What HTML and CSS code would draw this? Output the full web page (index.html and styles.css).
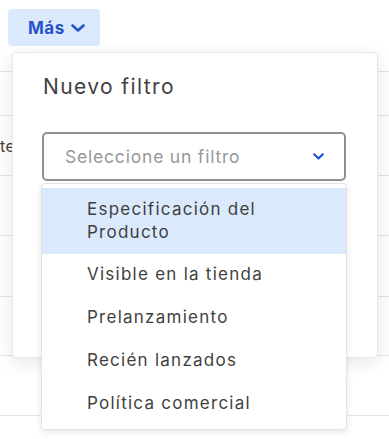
FILE: index.html
```html
<!DOCTYPE html>
<html lang="es">
<head>
<meta charset="utf-8">
<link rel="stylesheet" href="styles.css">
</head>
<body>
<div class="page">
  <div class="toolbar">
    <button class="more-btn">Más
      <svg class="more-chev" width="14" height="8" viewBox="0 0 14 8"><path d="M1.5 1.5 L7 6.5 L12.5 1.5" fill="none" stroke="currentColor" stroke-width="2.6" stroke-linecap="round" stroke-linejoin="round"/></svg>
    </button>
  </div>
  <div class="table">
    <div class="row r1"></div>
    <div class="row r2"></div>
    <div class="row r3"><span class="cell-text">te</span></div>
    <div class="row r4"></div>
    <div class="row r5"></div>
    <div class="row r6"></div>
    <div class="row r7"></div>
  </div>

  <div class="popover">
    <h2 class="pop-title">Nuevo filtro</h2>
    <div class="select-wrap">
      <div class="select">
        <span class="placeholder">Seleccione un filtro</span>
        <svg class="sel-chev" width="11" height="7" viewBox="0 0 11 7"><path d="M1.2 1.2 L5.5 5.5 L9.8 1.2" fill="none" stroke="currentColor" stroke-width="2" stroke-linecap="round" stroke-linejoin="round"/></svg>
      </div>
      <ul class="options">
        <li class="option active">Especificación del Producto</li>
        <li class="option">Visible en la tienda</li>
        <li class="option">Prelanzamiento</li>
        <li class="option">Recién lanzados</li>
        <li class="option">Política comercial</li>
      </ul>
    </div>
  </div>
</div>
</body>
</html>
```
FILE: styles.css
```css
* { box-sizing: border-box; }
html, body { margin: 0; padding: 0; background: #fff; }
body { font-family: Inter, "Noto Sans", sans-serif; color: #3f3f40; }
.page { position: relative; width: 389px; height: 439px; overflow: hidden; }

.toolbar { padding: 9px 8px 0; height: 46px; }
.more-btn {
  display: flex; align-items: center; gap: 6px;
  height: 37px; width: 92px; padding: 0 0 0 20px;
  background: #dbe9fd; color: #2953c8; border: 0; border-radius: 4px;
  font-family: inherit; font-size: 17px; font-weight: 700; letter-spacing: 0.5px;
}
.more-chev { margin-top: 1px; }

.table { display: flex; flex-direction: column; }
.row { border-bottom: 1px solid #e3e4e6; display: flex; align-items: center; }
.r1 { height: 26px; }
.r2 { height: 44px; }
.r3 { height: 60px; }
.r4 { height: 60px; }
.r5 { height: 61px; }
.r6 { height: 59px; }
.r7 { height: 60px; }
.cell-text { font-size: 16px; margin-left: 0; color: #3f3f40; letter-spacing: 0.3px; }

.popover {
  position: absolute; left: 12px; top: 52px; width: 366px; height: 306px;
  background: #fff; border: 1px solid #e6e7e9; border-radius: 4px;
  box-shadow: 0 4px 18px rgba(0,0,0,0.10);
  padding: 20px 0 0 29px;
}
.pop-title {
  margin: 0 0 0 1px; font-size: 21px; font-weight: 400; line-height: 28px;
  color: #3f3f40; letter-spacing: 1.4px;
}
.select-wrap { position: relative; margin-top: 31px; width: 304px; }
.select {
  height: 49px; border: 2px solid #8f9091; border-radius: 5px;
  display: flex; align-items: center; justify-content: space-between;
  padding: 0 20px 0 21px;
}
.placeholder { font-size: 17.5px; color: #979899; letter-spacing: 0.8px; }
.sel-chev { color: #134cd8; }

.options {
  position: absolute; left: -1px; top: 51px; width: 306px;
  margin: 0; padding: 4px 0 3px; list-style: none;
  background: #fff; border: 1px solid #e3e4e6; border-radius: 4px;
  box-shadow: 0 2px 6px rgba(0,0,0,0.10);
}
.option {
  padding: 10px 30px 10px 45px; font-size: 17px; line-height: 23px;
  color: #3f3f40; letter-spacing: 1.25px;
}
.option.active { background: #dbe9fd; }
.option + .option { padding-top: 9px; padding-bottom: 11px; }
```
